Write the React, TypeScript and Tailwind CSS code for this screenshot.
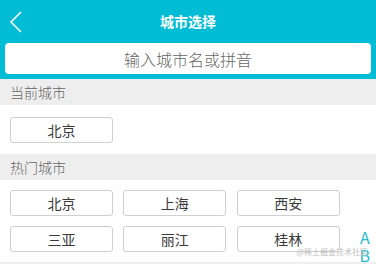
import React from 'react';

const CityButton = ({ name }: { name: string }) => (
  <button className="h-[26px] w-[103px] rounded-[3px] border border-[#cfcfcf] bg-white text-[14px] leading-none text-[#3a3a3a]">
    {name}
  </button>
);

const SectionTitle = ({ title }: { title: string }) => (
  <div className="flex h-[26px] items-center bg-[#eeeeee] pl-[10px] text-[14px] font-light text-[#666]">
    {title}
  </div>
);

export default function App() {
  const hotCities = ['北京', '上海', '西安', '三亚', '丽江', '桂林'];

  return (
    <div className="relative h-[264px] w-[376px] overflow-hidden bg-white font-['Noto_Sans_CJK_SC','Noto_Sans',sans-serif]">
      <div className="bg-[#00bcd4] pb-[5px]">
        <div className="flex h-[43px] items-center px-[8px]">
          <svg width="16" height="24" viewBox="0 0 16 24" fill="none" className="shrink-0">
            <polyline points="13,2 3,12 13,22" stroke="white" strokeWidth="1.6" strokeLinejoin="miter" />
          </svg>
          <div className="flex-1 pr-[16px] text-center text-[14px] font-bold text-white">城市选择</div>
        </div>
        <div className="mx-[5px] flex h-[31px] items-center justify-center rounded-[4px] bg-white text-[16px] font-light text-[#666]">
          输入城市名或拼音
        </div>
      </div>

      <SectionTitle title="当前城市" />
      <div className="px-[10px] pb-[11px] pt-[12px]">
        <CityButton name="北京" />
      </div>

      <SectionTitle title="热门城市" />
      <div className="grid w-[340px] grid-cols-3 gap-x-[10px] gap-y-[10px] pb-[10px] pl-[10px] pt-[10px]">
        {hotCities.map((c) => (
          <CityButton key={c} name={c} />
        ))}
      </div>
      <div className="h-[4px] bg-[#eeeeee]" />

      <div className="absolute right-[6px] top-[228px] flex flex-col items-center text-[16px] leading-[18px] text-[#26bcd0]">
        <span>A</span>
        <span>B</span>
      </div>
      <div className="absolute right-[8px] top-[246px] text-[8px] text-[#bdbdbd]">@稀土掘金技术社区</div>
    </div>
  );
}
